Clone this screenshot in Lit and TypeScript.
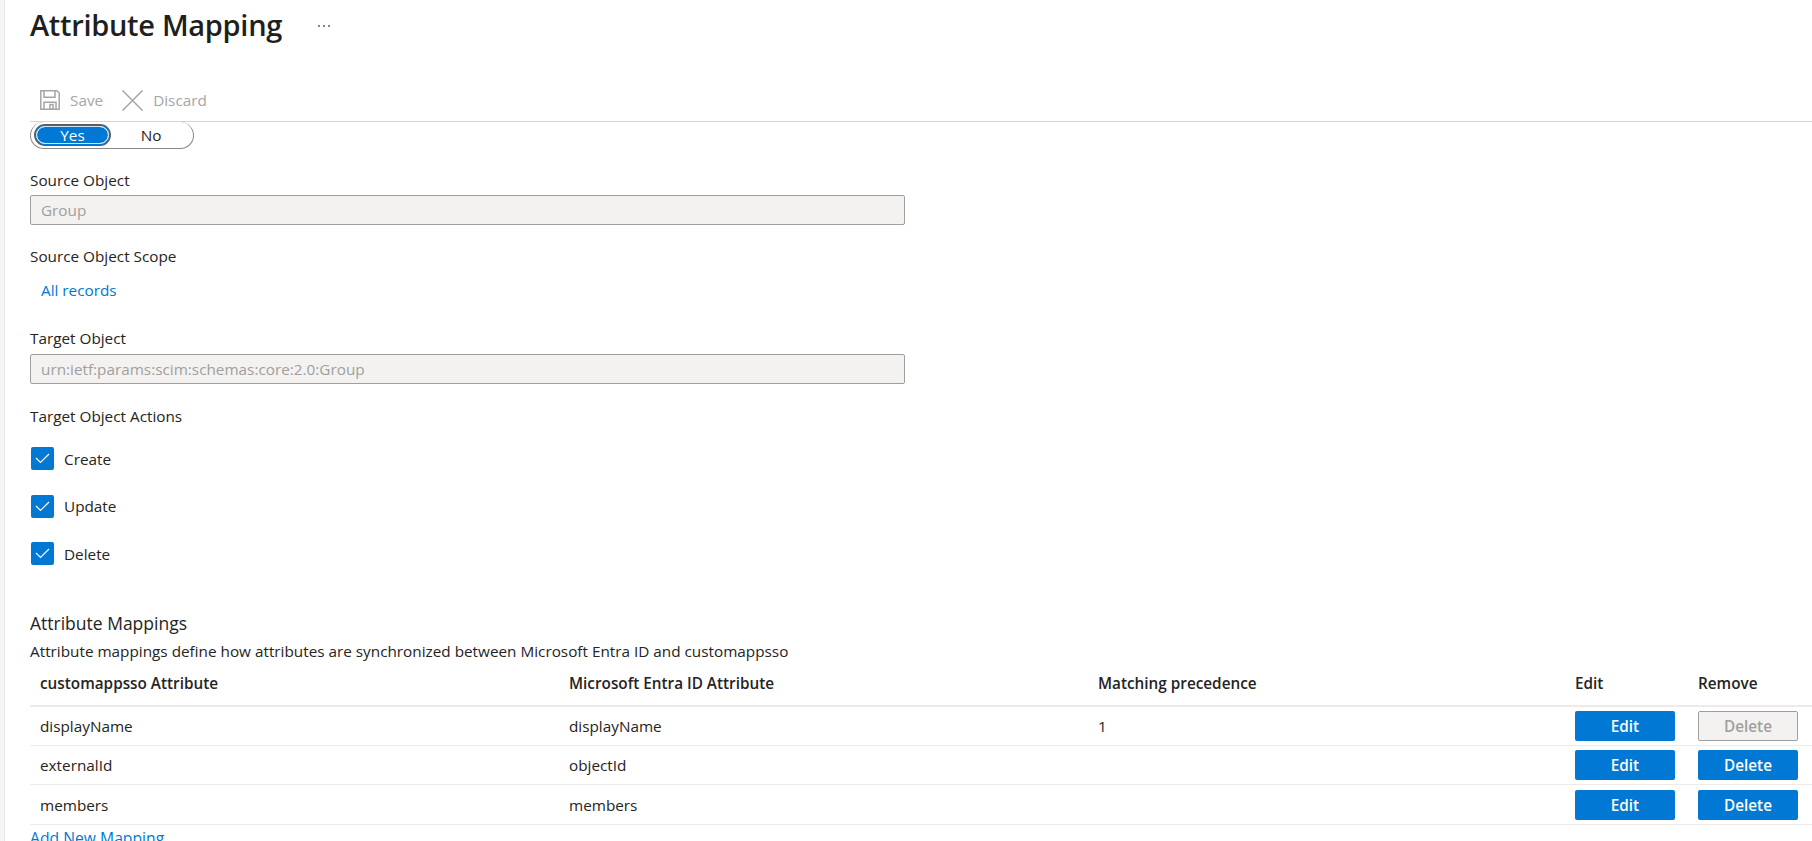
import { LitElement, html, css } from "lit";
import { customElement } from "lit/decorators.js";

const rows = [
  { a: "displayName", b: "displayName", c: "1", del: false },
  { a: "externalId", b: "objectId", c: "", del: true },
  { a: "members", b: "members", c: "", del: true },
];

@customElement("app-root")
export class AppRoot extends LitElement {
  static styles = css`
    :host { display: block; width: 1812px; height: 841px; overflow: hidden; background: #fff; color: #252423;
      font-family: "Open Sans", "Noto Sans", "Liberation Sans", sans-serif; font-size: 15.3px; }
    .page { height: 841px; margin-left: 4px; border-left: 1px solid #e8e8e8; padding-left: 25px; display: flex; flex-direction: column; box-sizing: border-box; box-shadow: -4px 0 0 #f5f5f5; }
    .page > * { flex: none; }
    .head { height: 50px; display: flex; align-items: center; }
    h1 { margin: 0; font-size: 29px; font-weight: 600; line-height: 50px; letter-spacing: -0.3px; color: #201f1e; }
    .more { margin-left: 36px; display: flex; gap: 3px; margin-top: 2px; }
    .more i { width: 2px; height: 2px; background: #605e5c; border-radius: 50%; }
    .bar { margin-top: 29px; height: 42px; display: flex; align-items: center; color: #a6a6a6; }
    .bar svg { display: block; }
    .bar span { margin-left: 10px; margin-right: 19px; }
    .rule { height: 1px; background: #d6d6d6; }
    .toggle { width: 164px; height: 27px; box-sizing: border-box; border: 1px solid #8a8886; border-top: none; border-radius: 14px; display: flex; align-items: center; padding-left: 4px; }
    .yes { width: 75px; height: 20px; box-sizing: border-box; background: #0078d4; color: #fff; border-radius: 11px; box-shadow: 0 0 0 1px #fff inset, 0 0 0 1px #605e5c; border: 1px solid #0078d4; outline: 1px solid #cfe4f6; outline-offset: -2px; display: flex; align-items: center; justify-content: center; }
    .no { width: 82px; text-align: center; }
    .label { line-height: 20px; }
    .l1 { margin-top: 21px; }
    .l1 + .input { margin-top: 5px; }
    .l2 { margin-top: 21px; }
    .l3 { margin-top: 28px; }
    .l3 + .input { margin-top: 6px; }
    .l4 { margin-top: 22px; }
    .input { width: 875px; height: 30px; box-sizing: border-box; background: #f3f2f1; border: 1px solid #a19f9d; border-radius: 2px; color: #a19f9d; padding-left: 10px; display: flex; align-items: center; }
    a { color: #0078d4; text-decoration: none; }
    .all { margin: 14px 0 0 11px; line-height: 20px; }
    .checks { display: flex; flex-direction: column; gap: 24.5px; margin-top: 21px; padding-left: 1px; }
    .check { display: flex; align-items: center; gap: 10px; height: 23px; }
    .box { width: 23px; height: 23px; background: #0078d4; border-radius: 2px; display: flex; align-items: center; justify-content: center; }
    .h2 { margin-top: 46px; font-size: 17.5px; line-height: 24px; }
    .desc { margin-top: 6px; line-height: 20px; }
    .grid { display: grid; grid-template-columns: 529px 529px 477px 123px 1fr; padding-left: 10px; align-items: center; border-bottom: 1px solid #edebe9; height: 39px; box-sizing: border-box; }
    .grid.hd { height: 46px; border-bottom: 2px solid #edebe9; font-weight: 600; color: #252423; }
    .grid.r3 { height: 40px; }
    .btn { width: 100px; height: 30px; box-sizing: border-box; background: #0078d4; color: #fff; border-radius: 2px; font-weight: 600; display: flex; align-items: center; justify-content: center; }
    .btn.off { background: #f3f2f1; color: #a19f9d; border: 1px solid #a19f9d; }
    .add { line-height: 20px; margin-top: 3px; font-size: 15.7px; }
  `;

  render() {
    return html`
      <div class="page">
        <div class="head"><h1>Attribute Mapping</h1><div class="more"><i></i><i></i><i></i></div></div>
        <div class="bar">
          <svg width="20" height="20" viewBox="0 0 20 20" fill="none" stroke="#a6a6a6" stroke-width="1.5" style="margin-left:10px"><path d="M.8.8h16.2l2.2 2.2v16.2H.8z"/><path d="M4 .8v6.4h11V.8M4 19.2v-7h12v7"/><path d="M10 14.5h3v4.7h-3z"/></svg>
          <span>Save</span>
          <svg width="21" height="21" viewBox="0 0 21 21" fill="none" stroke="#a6a6a6" stroke-width="1.5"><path d="M.5.5l20 20M20.5.5l-20 20"/></svg>
          <span>Discard</span>
        </div>
        <div class="rule"></div>
        <div class="toggle"><div class="yes">Yes</div><div class="no">No</div></div>
        <div class="label l1">Source Object</div>
        <div class="input">Group</div>
        <div class="label l2">Source Object Scope</div>
        <div class="all"><a>All records</a></div>
        <div class="label l3">Target Object</div>
        <div class="input">urn:ietf:params:scim:schemas:core:2.0:Group</div>
        <div class="label l4">Target Object Actions</div>
        <div class="checks">
          ${["Create", "Update", "Delete"].map(
            (t) => html`<div class="check"><div class="box"><svg width="15" height="11" viewBox="0 0 15 11" fill="none" stroke="#fff" stroke-width="1.2"><path d="M1 5l4.5 4.5L14 1"/></svg></div>${t}</div>`
          )}
        </div>
        <div class="h2">Attribute Mappings</div>
        <div class="desc">Attribute mappings define how attributes are synchronized between Microsoft Entra ID and customappsso</div>
        <div class="grid hd"><div>customappsso Attribute</div><div>Microsoft Entra ID Attribute</div><div>Matching precedence</div><div>Edit</div><div>Remove</div></div>
        ${rows.map(
          (r, i) => html`<div class="grid ${i === 2 ? "r3" : ""}"><div>${r.a}</div><div>${r.b}</div><div>${r.c}</div><div class="btn">Edit</div><div class="btn ${r.del ? "" : "off"}">Delete</div></div>`
        )}
        <div class="add"><a>Add New Mapping</a></div>
      </div>
    `;
  }
}
